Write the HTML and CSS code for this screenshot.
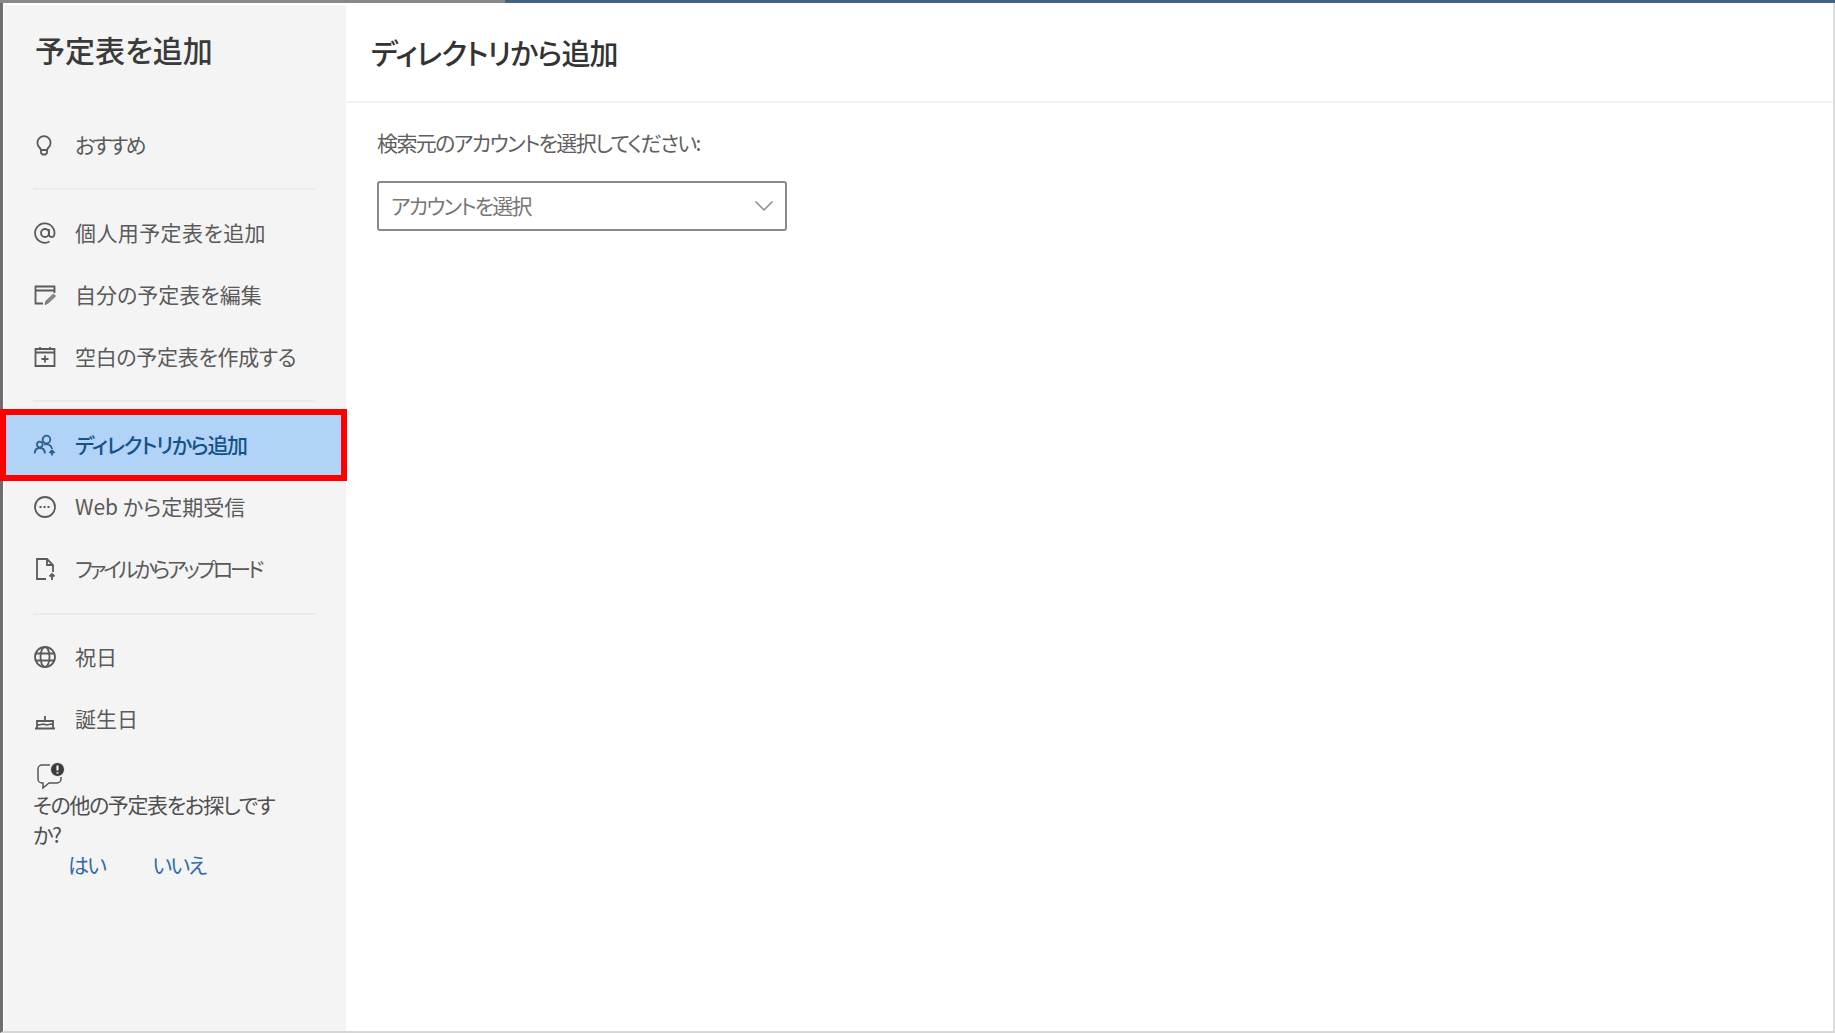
FILE: index.html
```html
<!DOCTYPE html>
<html lang="ja">
<head>
<meta charset="utf-8">
<title>予定表を追加</title>
<link rel="stylesheet" href="styles.css">
</head>
<body>
<div class="topbar"></div>
<div class="frame">
  <aside class="side">
    <h1 class="side-title">予定表を追加</h1>
    <div class="group">
      <div class="item"><svg class="ic" viewBox="0 0 24 24"><path d="M6.500 14.500a6.600 6.600 0 1 1 9 0c-.9.9-1.200 1.600-1.400 2.500H7.900c-.2-.9-.5-1.600-1.400-2.500zM8 17v3l1.500 1.500h3L14 20v-3"/></svg><span class="sp-x">おすすめ</span></div>
    </div>
    <div class="rule rule-a"></div>
    <div class="group">
      <div class="item"><svg class="ic" viewBox="0 0 24 24"><circle cx="12" cy="12" r="4"/><path d="M16 8v5.500a2.700 2.700 0 0 0 5.200 .8A9.700 9.700 0 1 0 16.500 20.500"/></svg><span class="sp-w">個人用予定表を追加</span></div>
      <div class="item"><svg class="ic" viewBox="0 0 24 24"><path d="M10 20.500H2.500V3.500h19V10M2.500 7.500h19"/><path class="thick" d="M12 21.500l1-3.500 7.500-7 2 2.200-7.500 7z"/></svg><span>自分の予定表を編集</span></div>
      <div class="item"><svg class="ic" viewBox="0 0 24 24"><path d="M2.500 4h19v17h-19zM2.500 7.500h19M7 2v2M17 2v2M12 10.500v7M8.500 14h7"/></svg><span class="sp-n">空白の予定表を作成する</span></div>
    </div>
    <div class="rule rule-b"></div>
    <div class="item item-active"><svg class="ic" viewBox="0 0 24 24"><circle cx="13.500" cy="6.500" r="3.800"/><circle cx="6.800" cy="11.500" r="2.800"/><path d="M1.800 20.500c0-3.500 2-5.500 5-5.500s5 2 5 5.500M11 11.500c3.500-1.200 7.500.5 8 4.500M19 17.500v5M16.500 20l2.500-2.500 2.500 2.500"/></svg><span class="sp-d">ディレクトリから追加</span></div>
    <div class="group group-after">
      <div class="item"><svg class="ic" viewBox="0 0 24 24"><circle cx="12" cy="12" r="10"/><path class="dots" d="M6.500 12h11"/></svg><span>Web から定期受信</span></div>
      <div class="item"><svg class="ic" viewBox="0 0 24 24"><path d="M13 22H4V2h10l6 6v7M14 2v6h6M19 23v-6M16.500 19.500l2.500-2.500 2.500 2.500"/></svg><span class="sp-f">ファイルからアップロード</span></div>
    </div>
    <div class="rule rule-c"></div>
    <div class="group">
      <div class="item"><svg class="ic" viewBox="0 0 24 24"><circle cx="12" cy="12" r="10"/><ellipse cx="12" cy="12" rx="4.500" ry="10"/><path d="M2.500 8.500h19M2.500 15.500h19"/></svg><span>祝日</span></div>
      <div class="item"><svg class="ic" viewBox="0 0 24 24"><path d="M2 21.500h20M4 21V14h16v7M4 17.500c2.700 1.500 5.300-1.500 8 0s5.300-1.500 8 0M12 14V9"/></svg><span>誕生日</span></div>
    </div>
    <div class="feedback">
      <svg class="fb-ic" viewBox="0 0 30 28"><path d="M14 3H6a4 4 0 0 0-4 4v10a4 4 0 0 0 4 4h1v5l6-5h8a4 4 0 0 0 4-4v-2"/><circle class="fill" cx="21.500" cy="7.500" r="7"/><path class="mark" d="M21.500 3.500v5M21.500 10.200v1.400"/></svg>
      <p class="fb-text">その他の予定表をお探しですか?</p>
      <div class="fb-links"><a class="fb-link">はい</a><a class="fb-link">いいえ</a></div>
    </div>
  </aside>
  <main class="content">
    <header class="head"><h2 class="head-title">ディレクトリから追加</h2></header>
    <section class="body">
      <label class="lbl">検索元のアカウントを選択してください:</label>
      <div class="select"><span class="sel-text">アカウントを選択</span><svg class="chev" viewBox="0 0 20 12"><path d="M1.500 1.500L10 10l8.500-8.500"/></svg></div>
    </section>
  </main>
</div>
</body>
</html>
```

FILE: styles.css
```css
* { box-sizing: border-box; }
html, body { margin: 0; height: 100%; }
body {
  background: #fff;
  color: #444;
  font-family: "Noto Sans CJK JP", "Noto Sans", sans-serif;
  font-feature-settings: "palt";
  overflow: hidden;
}
.topbar {
  height: 3px;
  background: linear-gradient(90deg, #85898c 0, #85898c 505px, #3f6580 505px, #3f6580 100%);
}
.frame {
  display: flex;
  height: 1030px;
  border-left: 3px solid #6f6f6f;
  border-right: 2px solid #dcdcdc;
  border-bottom: 2px solid #d6d6d6;
}
.side {
  width: 343px;
  flex: none;
  background: #f4f4f4;
  border-top: 2px solid #fff;
  border-left: 2px solid #fbfbfb;
}
.side-title {
  margin: 0;
  padding: 23px 0 0 30px;
  height: 109px;
  font-size: 30px;
  line-height: 42px;
  font-weight: 500;
  color: #3a3a3a;
}
.item {
  height: 62px;
  display: flex;
  align-items: center;
  padding-left: 28px;
  gap: 18px;
  font-size: 21px;
  color: #5a5a5a;
}
.item span { margin-bottom: 2px; }
.ic {
  width: 24px;
  height: 24px;
  flex: none;
  fill: none;
  stroke: #5a5a5a;
  stroke-width: 1.800;
}
.ic .thick { fill: #888; stroke: #777; stroke-width: 1; }
.ic .dots { stroke-dasharray: 2 2; stroke-width: 2; }
.sp-x { letter-spacing: -2.500px; }
.sp-w { letter-spacing: .4px; }
.sp-n { letter-spacing: -.3px; }
.sp-d { letter-spacing: -1.400px; }
.sp-f { letter-spacing: -3.200px; }
.rule { height: 2px; background: #ebebeb; margin-left: 28px; width: 282px; }
.rule-a { margin-top: 12px; margin-bottom: 12px; }
.rule-b { margin-top: 12px; margin-bottom: 13px; }
.rule-c { margin-top: 13px; margin-bottom: 11px; }
.item-active {
  margin-left: 1px;
  width: 335px;
  height: 60px;
  outline: 6px solid #f00;
  padding-left: 27px;
  background: #b1d3f8;
  color: #14538a;
  font-weight: 500;
}
.item-active .ic { stroke: #2a5f8f; }
.group-after { margin-top: 1px; }
.feedback { padding-left: 28px; margin-top: 12px; width: 290px; }
.fb-ic { display: block; width: 30px; height: 28px; margin-left: 3px; fill: none; stroke: #555; stroke-width: 1.500; }
.fb-ic .fill { fill: #3c3c3c; stroke: #f4f4f4; stroke-width: 1; }
.fb-ic .mark { stroke: #fff; stroke-width: 2; }
.fb-text { margin: -1px 0 0; font-size: 21px; line-height: 30px; letter-spacing: -1.400px; color: #4f4f4f; }
.fb-links { display: flex; gap: 47px; padding-left: 35px; font-size: 21px; line-height: 30px; letter-spacing: -1.800px; }
.fb-link { color: #2e6ca8; }
.content { flex: 1; display: flex; flex-direction: column; }
.head {
  height: 100px;
  border-bottom: 2px solid #f2f2f2;
  padding: 28px 0 0 25px;
}
.head-title { margin: 0; font-size: 29px; line-height: 42px; font-weight: 500; letter-spacing: -1px; color: #333; }
.body { padding: 24px 0 0 31px; }
.lbl { display: block; font-size: 21px; line-height: 30px; letter-spacing: -1.600px; color: #606060; }
.select {
  margin-top: 24px;
  width: 410px;
  height: 50px;
  border: 2px solid #8a8a8a;
  border-radius: 3px;
  display: flex;
  align-items: center;
  justify-content: space-between;
  padding: 0 11px 0 12px;
  font-size: 21px;
  color: #777;
}
.sel-text { letter-spacing: -1.800px; margin-bottom: 2px; }
.chev { width: 20px; height: 12px; fill: none; stroke: #8a8a8a; stroke-width: 1.500; }
```
